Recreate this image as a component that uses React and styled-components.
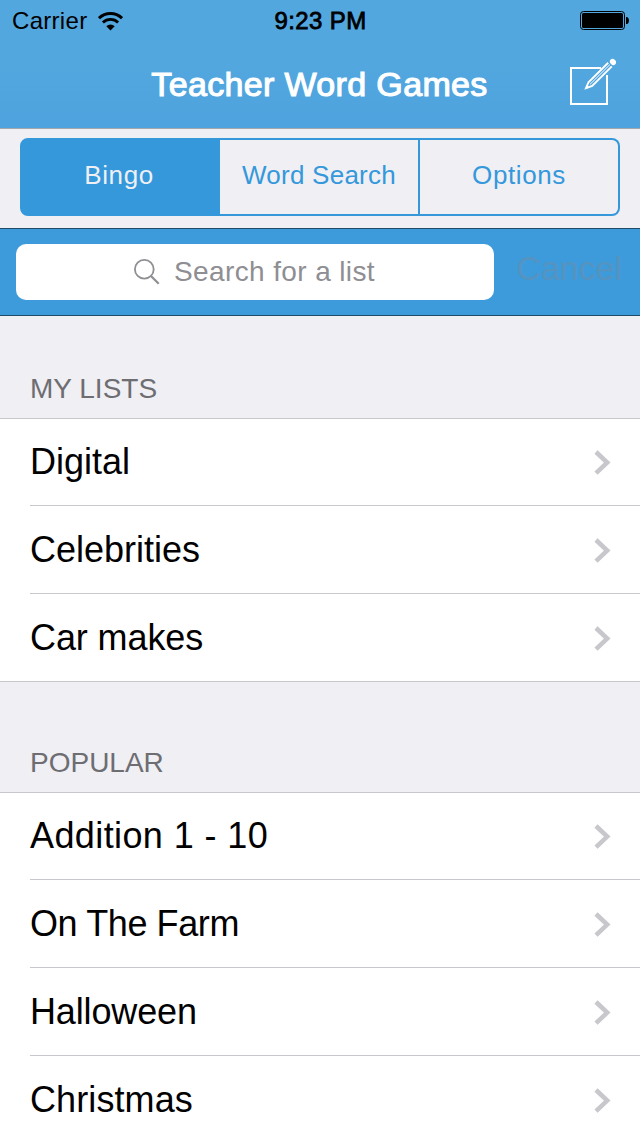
import styled, { createGlobalStyle } from 'styled-components';

const GlobalStyle = createGlobalStyle`
  * {
    box-sizing: border-box;
  }

  body {
    margin: 0;
    background: #efeff4;
    font-family: 'Liberation Sans', Arial, sans-serif;
  }
`;

const Wrapper = styled.div`
  display: flex;
  flex-direction: column;
  width: 640px;
  height: 1136px;
  overflow: hidden;
  background: #efeff4;
`;

const Header = styled.header`
  flex: none;
  height: 129px;
  background: linear-gradient(#53a7df 50%, #4fa3de);
  border-bottom: 1px solid #a3a8b0;
`;

const StatusBar = styled.div`
  display: grid;
  grid-template-columns: 1fr auto 1fr;
  align-items: center;
  height: 40px;
  padding: 0 11px 0 12px;
  color: #000;
  font-size: 24px;
`;

const Carrier = styled.div`
  display: flex;
  align-items: center;
  gap: 11px;
  padding-top: 2px;
  letter-spacing: 0.3px;
`;

const Clock = styled.div`
  padding-top: 2px;
  letter-spacing: 0.4px;
  -webkit-text-stroke: 0.8px #000;
`;

const Battery = styled.svg`
  justify-self: end;
`;

const NavBar = styled.div`
  display: grid;
  grid-template-columns: 1fr auto 1fr;
  align-items: center;
  height: 88px;
  padding-right: 24px;
`;

const NavTitle = styled.h1`
  grid-column: 2;
  margin: 0 0 0 23px;
  color: #fff;
  font-size: 34px;
  font-weight: 400;
  letter-spacing: 0.35px;
  -webkit-text-stroke: 1.1px #fff;
`;

const ComposeButton = styled.button`
  display: flex;
  justify-self: end;
  margin-bottom: 4px;
  padding: 0;
  border: 0;
  background: none;
`;

const SegmentSection = styled.div`
  flex: none;
  height: 99px;
  padding: 9px 20px 0;
`;

const SegmentControl = styled.div`
  display: grid;
  grid-template-columns: 200px 200px 200px;
  height: 78px;
`;

const Segment = styled.button`
  padding: ${({ $first }) => ($first ? '0 2px 4px 0' : '0 0 4px')};
  border: 2px solid #3498db;
  border-left-width: ${({ $first }) => ($first ? '2px' : '0')};
  border-radius: ${({ $first, $last }) =>
    $first ? '8px 0 0 8px' : $last ? '0 8px 8px 0' : '0'};
  background: ${({ $active }) => ($active ? '#3498db' : 'transparent')};
  color: ${({ $active }) => ($active ? '#efeff4' : '#3498db')};
  font-family: inherit;
  font-size: 26px;
  letter-spacing: ${({ $spacing }) => $spacing}px;
`;

const SearchBar = styled.div`
  flex: none;
  display: flex;
  align-items: center;
  height: 88px;
  padding: 0 18px 0 16px;
  border-top: 1px solid #214a68;
  border-bottom: 1px solid #214a68;
  background: #3d9bdc;
`;

const SearchField = styled.div`
  display: flex;
  align-items: center;
  justify-content: center;
  gap: 14px;
  width: 478px;
  height: 56px;
  padding-right: 1px;
  border-radius: 10px;
  background: #fff;
  color: #8e8e93;
  font-size: 28px;
  letter-spacing: 0.38px;
`;

const CancelButton = styled.button`
  margin-left: auto;
  padding: 0 0 8px;
  border: 0;
  background: none;
  color: #5593c0;
  font-family: inherit;
  font-size: 34px;
`;

const SectionTitle = styled.h2`
  flex: none;
  display: flex;
  align-items: flex-end;
  height: ${({ $first }) => ($first ? '102px' : '110px')};
  margin: 0;
  padding: 0 30px 13px;
  color: #6d6d72;
  font-size: 28px;
  font-weight: 400;
`;

const List = styled.ul`
  flex: none;
  margin: 0;
  padding: 0;
  border-top: 1px solid #c8c7cc;
  border-bottom: 1px solid #c8c7cc;
  background: #fff;
  list-style: none;
`;

const ListItem = styled.li`
  display: flex;
  align-items: center;
  justify-content: space-between;
  height: 88px;
  margin-left: 30px;
  padding: 2px 29px 0 0;
  border-bottom: 1px solid #c8c7cc;

  &:first-child {
    height: 87px;
    padding-top: 1px;
  }

  &:last-child {
    height: 87px;
    border-bottom: 0;
  }
`;

const ListItemName = styled.span`
  padding-bottom: 2px;
  font-size: 36px;
  letter-spacing: ${({ $spacing }) => $spacing || 0}px;
`;

const sections = [
  {
    title: 'MY LISTS',
    items: [
      { name: 'Digital' },
      { name: 'Celebrities' },
      { name: 'Car makes', spacing: -0.1 },
    ],
  },
  {
    title: 'POPULAR',
    items: [
      { name: 'Addition 1 - 10', spacing: 0.4 },
      { name: 'On The Farm', spacing: -0.4 },
      { name: 'Halloween', spacing: -0.15 },
      { name: 'Christmas', spacing: 0.1 },
    ],
  },
];

const segments = [
  { name: 'Bingo', spacing: 0.6 },
  { name: 'Word Search', spacing: 0.25 },
  { name: 'Options', spacing: 0.6 },
];

function WifiIcon() {
  return (
    <svg width="25" height="19" viewBox="0 0 25 19" fill="none">
      <path d="M1 6.2a16.5 16.5 0 0 1 23 0" stroke="#000" strokeWidth="3" />
      <path d="M4.9 10.5a11 11 0 0 1 15.2 0" stroke="#000" strokeWidth="2.8" />
      <path d="M8.3 14.2a6 6 0 0 1 8.4 0L12.5 18.5z" fill="#000" />
    </svg>
  );
}

function BatteryIcon() {
  return (
    <Battery width="49" height="19" viewBox="0 0 49 19">
      <rect x="0.5" y="0.5" width="44" height="18" rx="3" fill="none" stroke="#000" />
      <rect x="2" y="2" width="41" height="15" rx="1.5" fill="#000" />
      <path d="M46 6h1.2Q49 7 49 9.5T47.2 13H46z" fill="#000" />
    </Battery>
  );
}

function ComposeIcon() {
  return (
    <svg width="48" height="48" viewBox="0 0 48 48" fill="none">
      <path d="M33 10H3v36h36V17" stroke="#fff" strokeWidth="2" />
      <path d="M40.2 4.8 20.5 24.2 18 30.2 24.2 28 43.8 8.4" stroke="#fff" strokeWidth="1.9" />
      <path d="M41.9 6.6 22 26.4" stroke="#fff" strokeWidth="1" />
      <path d="M17.4 31 18.5 27 21.5 29.8z" fill="#fff" />
      <ellipse cx="45" cy="3.9" rx="3.3" ry="2.8" transform="rotate(45 45 3.9)" fill="#fff" />
    </svg>
  );
}

function SearchIcon() {
  return (
    <svg width="26" height="26" viewBox="0 0 26 26" fill="none" stroke="#8e8e93">
      <circle cx="10.3" cy="10.3" r="9.4" strokeWidth="1.8" />
      <path d="M17 17 24.7 24.7" strokeWidth="2.2" />
    </svg>
  );
}

function Chevron() {
  return (
    <svg width="17" height="26" viewBox="0 0 17 26" fill="none">
      <path d="M2 2 13.2 12.6 2 23.2" stroke="#c7c7cc" strokeWidth="4.6" />
    </svg>
  );
}

function App() {
  return (
    <Wrapper>
      <GlobalStyle />
      <Header>
        <StatusBar>
          <Carrier>
            Carrier
            <WifiIcon />
          </Carrier>
          <Clock>9:23 PM</Clock>
          <BatteryIcon />
        </StatusBar>
        <NavBar>
          <NavTitle>Teacher Word Games</NavTitle>
          <ComposeButton aria-label="New list">
            <ComposeIcon />
          </ComposeButton>
        </NavBar>
      </Header>
      <SegmentSection>
        <SegmentControl>
          {segments.map(({ name, spacing }, i) => (
            <Segment
              key={name}
              $active={i === 0}
              $first={i === 0}
              $last={i === segments.length - 1}
              $spacing={spacing}
            >
              {name}
            </Segment>
          ))}
        </SegmentControl>
      </SegmentSection>
      <SearchBar>
        <SearchField>
          <SearchIcon />
          Search for a list
        </SearchField>
        <CancelButton>Cancel</CancelButton>
      </SearchBar>
      {sections.map((section, i) => (
        <div key={section.title}>
          <SectionTitle $first={i === 0}>{section.title}</SectionTitle>
          <List>
            {section.items.map(({ name, spacing }) => (
              <ListItem key={name}>
                <ListItemName $spacing={spacing}>{name}</ListItemName>
                <Chevron />
              </ListItem>
            ))}
          </List>
        </div>
      ))}
    </Wrapper>
  );
}

export default App;
